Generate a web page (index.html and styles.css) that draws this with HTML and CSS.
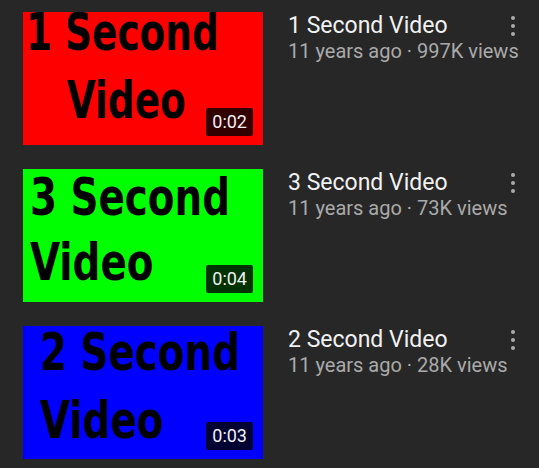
FILE: index.html
```html
<!DOCTYPE html>
<html>
<head>
    <title>Videos</title>
    <link rel="stylesheet" href="styles.css">
</head>
<body>
    <div class="video-list">
        <div class="video-row">
            <div class="thumb thumb-red">
                <div class="thumb-text text-one">1 Second<br><span class="indent">Video</span></div>
                <span class="duration">0:02</span>
            </div>
            <div class="video-info">
                <div class="video-title">1 Second Video</div>
                <div class="video-meta">11 years ago · 997K views</div>
            </div>
            <div class="more-button"><span></span><span></span><span></span></div>
        </div>
        <div class="video-row">
            <div class="thumb thumb-green">
                <div class="thumb-text text-three">3 Second<br>Video</div>
                <span class="duration">0:04</span>
            </div>
            <div class="video-info">
                <div class="video-title">3 Second Video</div>
                <div class="video-meta">11 years ago · 73K views</div>
            </div>
            <div class="more-button"><span></span><span></span><span></span></div>
        </div>
        <div class="video-row">
            <div class="thumb thumb-blue">
                <div class="thumb-text text-two">2 Second<br>Video</div>
                <span class="duration">0:03</span>
            </div>
            <div class="video-info">
                <div class="video-title">2 Second Video</div>
                <div class="video-meta">11 years ago · 28K views</div>
            </div>
            <div class="more-button"><span></span><span></span><span></span></div>
        </div>
    </div>
</body>
</html>
```
FILE: styles.css
```css
body {
    margin: 0;
    background-color: #272727;
    font-family: Roboto, "Liberation Sans", sans-serif;
}
.video-list {
    display: flex;
    flex-direction: column;
    gap: 24px;
    padding: 12px 0 0 23px;
}
.video-row {
    display: flex;
    align-items: flex-start;
}
.thumb {
    position: relative;
    width: 240px;
    height: 133px;
    flex-shrink: 0;
    overflow: hidden;
}
.thumb-red { background-color: #ff0000; }
.thumb-green { background-color: #00ff00; }
.thumb-blue { background-color: #0000ff; }
.thumb-text {
    font-family: "DejaVu Sans Condensed", "DejaVu Sans", sans-serif;
    font-weight: bold;
    font-size: 52px;
    color: #000;
    white-space: nowrap;
    transform: scaleX(0.83);
    transform-origin: 0 0;
}
.text-one {
    line-height: 68px;
    margin: -14px 0 0 3px;
    transform: scaleX(0.8);
}
.text-one .indent {
    padding-left: 51px;
}
.text-three {
    line-height: 65px;
    margin: -4px 0 0 7px;
}
.text-two {
    line-height: 68px;
    margin: -8px 0 0 17px;
}
.duration {
    position: absolute;
    right: 10px;
    bottom: 9px;
    padding: 3px 6px;
    border-radius: 2px;
    background-color: rgba(0, 0, 0, 0.8);
    color: #f1f1f1;
    font-size: 18px;
    line-height: 22px;
}
.video-info {
    flex: 1;
    min-width: 0;
    padding: 1px 0 0 25px;
    white-space: nowrap;
}
.video-title {
    color: #f1f1f1;
    font-size: 23px;
    line-height: 26px;
}
.video-meta {
    color: #aaaaaa;
    font-size: 20px;
    line-height: 24px;
}
.more-button {
    display: flex;
    flex-direction: column;
    gap: 4px;
    padding: 4px 24px 0 10px;
}
.more-button span {
    width: 4px;
    height: 4px;
    border-radius: 50%;
    background-color: #aaaaaa;
}
```
